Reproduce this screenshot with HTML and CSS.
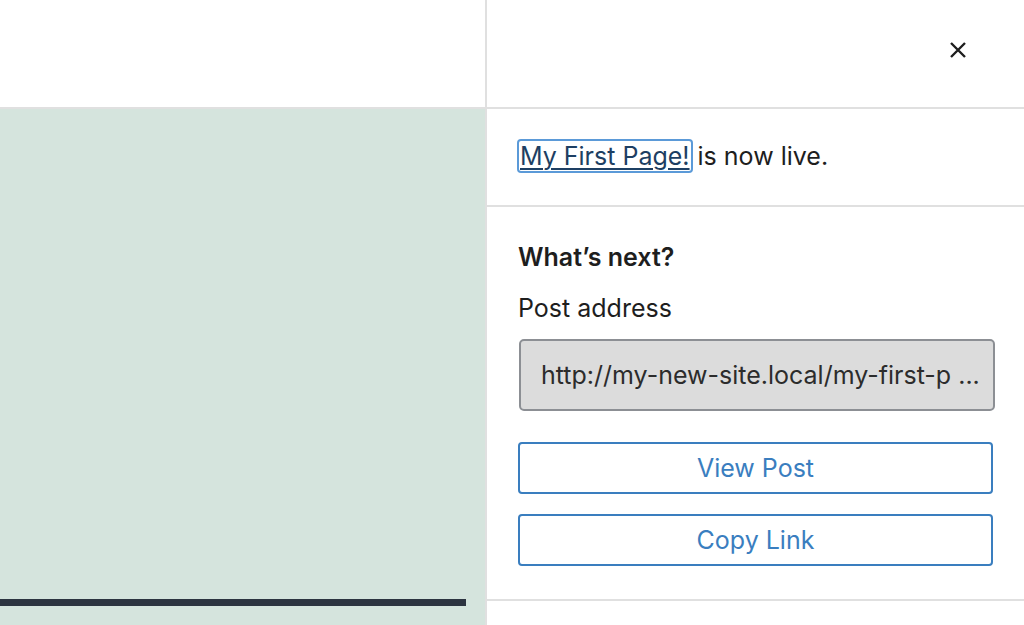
FILE: index.html
```html
<!DOCTYPE html>
<html>
<head>
<meta charset="utf-8">
<link rel="stylesheet" href="styles.css">
</head>
<body>
<div class="editor">
  <div class="editor-top"></div>
  <div class="canvas">
    <div class="canvas-bar"></div>
  </div>
</div>
<aside class="sidebar">
  <div class="sidebar-header">
    <button class="close" aria-label="Close">
      <svg width="18" height="18" viewBox="0 0 18 18"><path d="M2 2 L16 16 M16 2 L2 16" stroke="#1e1e1e" stroke-width="2.4" fill="none"/></svg>
    </button>
  </div>
  <div class="live">
    <p class="live-text"><a class="live-link" href="#">My First Page!</a> is now live.</p>
  </div>
  <div class="next">
    <h2 class="next-title">What’s next?</h2>
    <label class="next-label">Post address</label>
    <div class="address">http://my-new-site.local/my-first-p ...</div>
    <button class="btn">View Post</button>
    <button class="btn">Copy Link</button>
  </div>
</aside>
</body>
</html>
```

FILE: styles.css
```css
* { box-sizing: border-box; }
html, body { margin: 0; padding: 0; }
body {
  width: 1024px;
  height: 625px;
  overflow: hidden;
  display: flex;
  font-family: Inter, "Liberation Sans", sans-serif;
  font-size: 25px;
  color: #1e1e1e;
  background: #fff;
}
.editor {
  width: 485px;
  display: flex;
  flex-direction: column;
}
.editor-top {
  height: 109px;
  border-bottom: 2px solid #e0e0e0;
  background: #fff;
}
.canvas {
  flex: 1;
  background: #d5e4dd;
  padding-top: 490px;
}
.canvas-bar {
  width: 466px;
  height: 7px;
  background: #2c3440;
}
.sidebar {
  flex: 1;
  border-left: 2px solid #e0e0e0;
  display: flex;
  flex-direction: column;
}
.sidebar-header {
  height: 109px;
  border-bottom: 2px solid #e0e0e0;
  display: flex;
  justify-content: flex-end;
  align-items: center;
  padding-right: 57px;
  padding-bottom: 8px;
}
.close {
  border: 0;
  background: none;
  padding: 0;
  width: 18px;
  height: 18px;
  display: flex;
}
.live {
  height: 98px;
  border-bottom: 2px solid #e0e0e0;
  display: flex;
  align-items: center;
  padding: 0 31px 2px;
}
.live-text {
  margin: 0;
  line-height: 32px;
  color: #1e1e1e;
}
.live-link {
  color: #1d3f63;
  text-decoration: underline;
  text-underline-offset: 3px;
  text-decoration-thickness: 2px;
  box-shadow: 0 0 0 2px #5b9ad8;
  border-radius: 2px;
  padding: 0 1px;
  margin-left: 1px;
}
.next {
  height: 394px;
  border-bottom: 2px solid #e0e0e0;
  padding: 34px 31px 0;
  display: flex;
  flex-direction: column;
}
.next-title {
  margin: 0;
  font-size: 25px;
  font-weight: 600;
  line-height: 32px;
}
.next-label {
  margin-top: 19px;
  line-height: 32px;
}
.address {
  margin-top: 15px;
  height: 72px;
  margin-left: 1px;
  margin-right: -2px;
  background: #dcdcdc;
  border: 2px solid #8c8f94;
  border-radius: 5px;
  display: flex;
  align-items: center;
  padding-left: 20px;
  color: #2c2c2c;
  white-space: nowrap;
  overflow: hidden;
}
.btn {
  margin-top: 31px;
  height: 52px;
  background: #fff;
  border: 2px solid #3a7ebf;
  border-radius: 4px;
  color: #3a7ebf;
  font-family: inherit;
  font-size: 25px;
}
.btn + .btn {
  margin-top: 20px;
}
```
